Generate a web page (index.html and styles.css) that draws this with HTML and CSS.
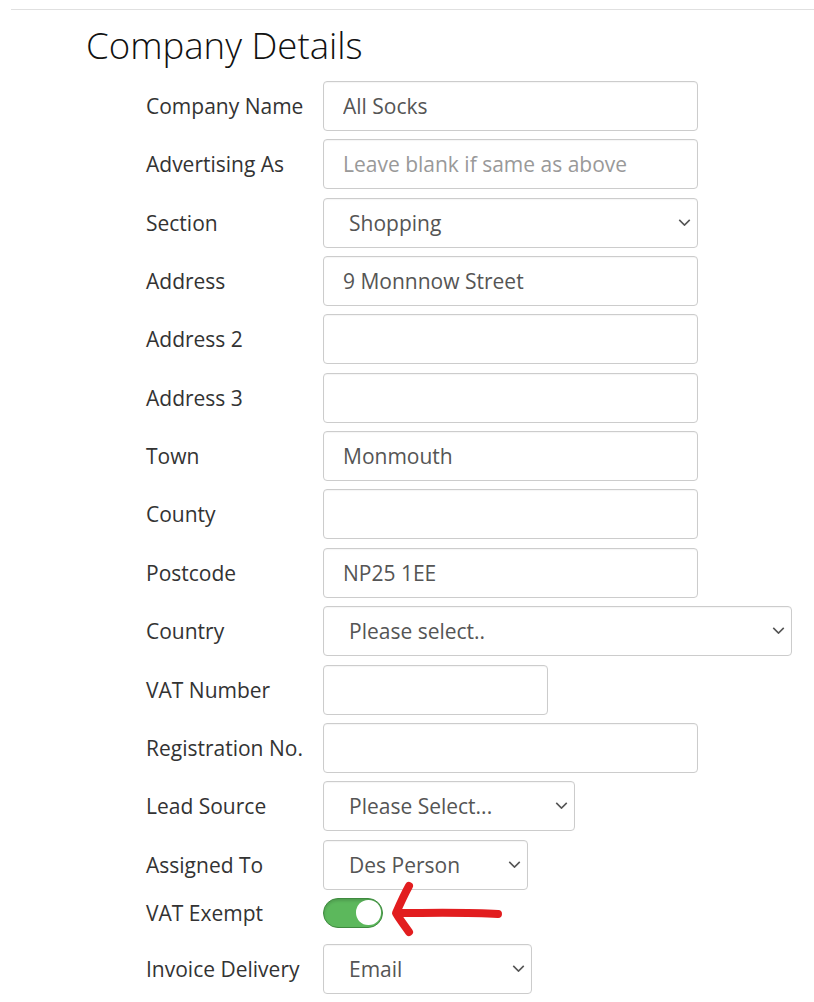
FILE: index.html
```html
<!DOCTYPE html>
<html lang="en">
<head>
    <meta charset="UTF-8">
    <meta name="viewport" content="width=device-width, initial-scale=1.0">
    <title>Company Details</title>
    <link rel="stylesheet" href="styles.css">
</head>
<body>
    <hr class="rule">
    <h2 class="section-title">Company Details</h2>
    <form class="details-form">
        <div class="form-row">
            <label class="row-label">Company Name</label>
            <input type="text" class="field w-full" value="All Socks">
        </div>
        <div class="form-row">
            <label class="row-label">Advertising As</label>
            <input type="text" class="field w-full" placeholder="Leave blank if same as above">
        </div>
        <div class="form-row">
            <label class="row-label">Section</label>
            <div class="select-wrap w-full">
                <select class="field">
                    <option>Shopping</option>
                </select>
                <svg class="chevron" viewBox="0 0 14 8"><path d="M1 1 L7 7 L13 1"/></svg>
            </div>
        </div>
        <div class="form-row">
            <label class="row-label">Address</label>
            <input type="text" class="field w-full" value="9 Monnnow Street">
        </div>
        <div class="form-row">
            <label class="row-label">Address 2</label>
            <input type="text" class="field w-full">
        </div>
        <div class="form-row">
            <label class="row-label">Address 3</label>
            <input type="text" class="field w-full">
        </div>
        <div class="form-row">
            <label class="row-label">Town</label>
            <input type="text" class="field w-full" value="Monmouth">
        </div>
        <div class="form-row">
            <label class="row-label">County</label>
            <input type="text" class="field w-full">
        </div>
        <div class="form-row">
            <label class="row-label">Postcode</label>
            <input type="text" class="field w-full" value="NP25 1EE">
        </div>
        <div class="form-row">
            <label class="row-label">Country</label>
            <div class="select-wrap w-wide">
                <select class="field">
                    <option>Please select..</option>
                </select>
                <svg class="chevron" viewBox="0 0 14 8"><path d="M1 1 L7 7 L13 1"/></svg>
            </div>
        </div>
        <div class="form-row">
            <label class="row-label">VAT Number</label>
            <input type="text" class="field w-vat">
        </div>
        <div class="form-row">
            <label class="row-label">Registration No.</label>
            <input type="text" class="field w-full">
        </div>
        <div class="form-row">
            <label class="row-label">Lead Source</label>
            <div class="select-wrap w-lead">
                <select class="field">
                    <option>Please Select...</option>
                </select>
                <svg class="chevron" viewBox="0 0 14 8"><path d="M1 1 L7 7 L13 1"/></svg>
            </div>
        </div>
        <div class="form-row">
            <label class="row-label">Assigned To</label>
            <div class="select-wrap w-assign">
                <select class="field">
                    <option>Des Person</option>
                </select>
                <svg class="chevron" viewBox="0 0 14 8"><path d="M1 1 L7 7 L13 1"/></svg>
            </div>
        </div>
        <div class="form-row toggle-row">
            <label class="row-label">VAT Exempt</label>
            <label class="switch">
                <input type="checkbox" checked>
                <span class="slider"></span>
            </label>
            <!-- hand drawn arrow pointing at the switch -->
            <svg class="marker" width="124" height="60" viewBox="0 0 124 60">
                <path d="M21 6 C 16 15, 12 24, 8 33 C 12 40, 17 46, 21 52"/>
                <path d="M10 33 C 40 33, 80 32, 110 34"/>
            </svg>
        </div>
        <div class="form-row">
            <label class="row-label">Invoice Delivery</label>
            <div class="select-wrap w-invoice">
                <select class="field">
                    <option>Email</option>
                </select>
                <svg class="chevron" viewBox="0 0 14 8"><path d="M1 1 L7 7 L13 1"/></svg>
            </div>
        </div>
    </form>
</body>
</html>
```

FILE: styles.css
```css
* {
    margin: 0;
    padding: 0;
    box-sizing: border-box;
}

body {
    font-family: "Open Sans", Arial, sans-serif;
    background: #fff;
    color: #333;
}

.rule {
    border: none;
    border-top: 1px solid #e0e0e0;
    margin: 9px 0 0 11px;
}

.section-title {
    font-size: 36.6px;
    font-weight: 300;
    line-height: 1.1;
    color: #111;
    margin: 15px 0 0 86px;
}

.details-form {
    display: flex;
    flex-direction: column;
    gap: 8.4px;
    padding-left: 146px;
    margin-top: 15.5px;
}

.form-row {
    display: flex;
    align-items: center;
    position: relative;
}

.row-label {
    width: 177px;
    font-size: 21px;
    color: #333;
}

.field {
    height: 50px;
    border: 1px solid #ccc;
    border-radius: 4px;
    font-family: "Open Sans", Arial, sans-serif;
    font-size: 21px;
    color: #555;
    padding: 0 19px;
    background: #fff;
    box-shadow: inset 0 1px 1px rgba(0, 0, 0, 0.04);
}

.field::placeholder {
    color: #999;
}

.w-full { width: 375px; }
.w-wide { width: 469px; }
.w-vat { width: 225px; }
.w-lead { width: 252px; }
.w-assign { width: 205px; }
.w-invoice { width: 209px; }

.select-wrap {
    position: relative;
}

.select-wrap select {
    width: 100%;
    appearance: none;
    -webkit-appearance: none;
    padding-left: 25px;
}

.chevron {
    position: absolute;
    right: 7px;
    top: 21px;
    width: 13px;
    height: 7px;
    fill: none;
    stroke: #555;
    stroke-width: 1.8;
    pointer-events: none;
}

.toggle-row {
    height: 29.5px;
    margin-bottom: 7.4px;
}

.switch {
    position: relative;
    display: inline-block;
    width: 60px;
    height: 29.5px;
}

.switch input {
    display: none;
}

.slider {
    position: absolute;
    inset: 0;
    background: #5cb85c;
    border: 1.5px solid #3f8a3f;
    border-radius: 15px;
    box-shadow: inset 0 2px 3px rgba(0, 0, 0, 0.15);
}

.slider::before {
    content: "";
    position: absolute;
    right: 1.5px;
    top: 1px;
    width: 24.5px;
    height: 24.5px;
    border-radius: 50%;
    background: #fff;
}

.marker {
    position: absolute;
    left: 242px;
    top: -18px;
    fill: none;
    stroke: #e21d1f;
    stroke-width: 8;
    stroke-linecap: round;
    stroke-linejoin: round;
}
```
